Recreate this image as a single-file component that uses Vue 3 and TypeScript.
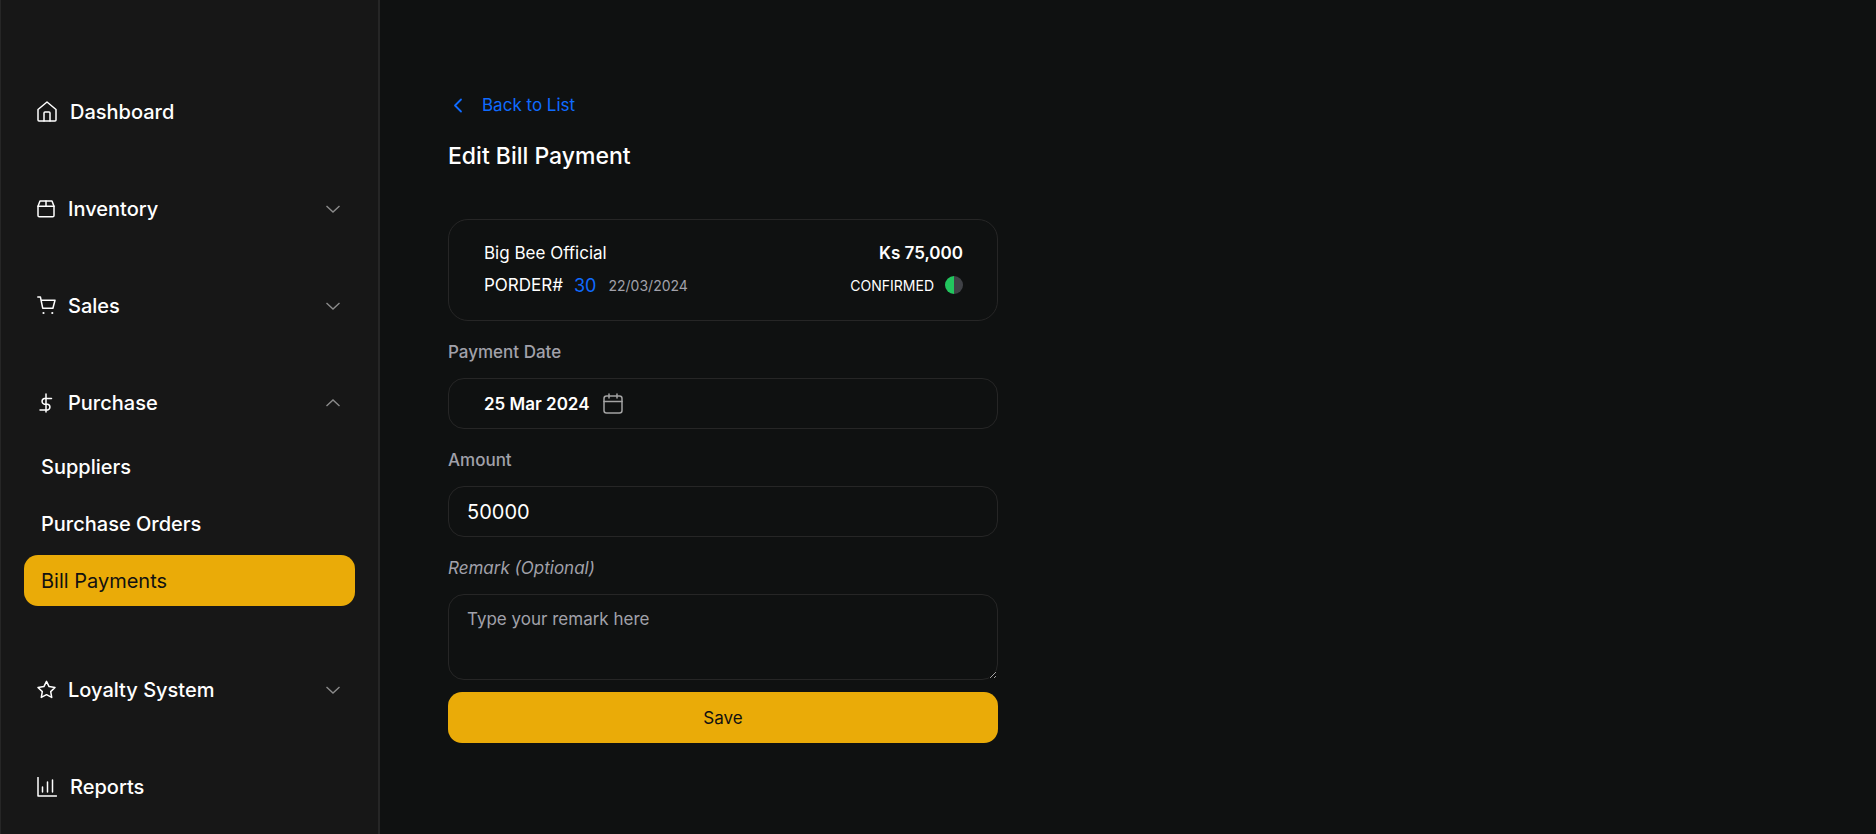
<script setup lang="ts">
interface NavItem { label: string; icon: string; gap: string; chevron?: 'up' | 'down'; children?: { label: string; active?: boolean }[] }
const items: NavItem[] = [
  { label: 'Dashboard', icon: 'home', gap: 'wide' },
  { label: 'Inventory', icon: 'box', gap: 'narrow', chevron: 'down' },
  { label: 'Sales', icon: 'cart', gap: 'narrow', chevron: 'down' },
  { label: 'Purchase', icon: 'dollar', gap: 'narrow', chevron: 'up', children: [
    { label: 'Suppliers' }, { label: 'Purchase Orders' }, { label: 'Bill Payments', active: true },
  ] },
  { label: 'Loyalty System', icon: 'star', gap: 'narrow', chevron: 'down' },
  { label: 'Reports', icon: 'chart', gap: 'wide' },
]
</script>

<template>
  <div class="shell">
    <aside class="sidebar">
      <nav class="nav">
        <div v-for="item in items" :key="item.label" class="group">
          <div class="item">
            <span class="icon-slot" :class="item.gap">
              <svg v-if="item.icon === 'home'" class="ic" width="20" height="21" viewBox="0 0 20 21"><path d="M1 8.500 10 1l9 7.500V19a1 1 0 0 1-1 1H2a1 1 0 0 1-1-1z"/><path d="M7 20v-8a1 1 0 0 1 1-1h4a1 1 0 0 1 1 1v8"/></svg>
              <svg v-else-if="item.icon === 'box'" class="ic" width="18" height="18" viewBox="0 0 18 18"><path d="M1 6.200 3 1h12l2 5.200v9.300a1.300 1.300 0 0 1-1.300 1.300H2.300A1.300 1.300 0 0 1 1 15.500z"/><path d="M1 6.200h16M9 1v5.200"/></svg>
              <svg v-else-if="item.icon === 'cart'" class="ic" width="19" height="19" viewBox="0 0 19 19"><path d="M.800 1h2.600l2.300 11.200h10.200L18 4.200H4.200"/><circle cx="6.500" cy="17" r="1.100" class="dot"/><circle cx="15.300" cy="17" r="1.100" class="dot"/></svg>
              <svg v-else-if="item.icon === 'dollar'" class="ic" width="18" height="20" viewBox="0 0 18 20"><path d="M9 1v18M14.500 5.400H7.300a3 3 0 0 0 0 5.800h3.400a3 3 0 0 1 0 5.800H3"/></svg>
              <svg v-else-if="item.icon === 'star'" class="ic" width="19" height="19" viewBox="0 0 19 19"><path d="m9.500 1.300 2.600 5.300 5.900.9-4.300 4.100 1 5.800-5.200-2.700-5.200 2.700 1-5.800L1 7.500l5.900-.9z"/></svg>
              <svg v-else class="ic" width="20" height="20" viewBox="0 0 20 20"><path d="M1 .500v18.500h18.500M5.500 15v-5M10.500 15V5M15.500 15V3"/></svg>
            </span>
            <span class="label">{{ item.label }}</span>
            <svg v-if="item.chevron" class="chev" :class="{ up: item.chevron === 'up' }" width="16" height="10" viewBox="0 0 16 10"><path d="m1.500 2 6.500 6 6.500-6"/></svg>
          </div>
          <div v-if="item.children" class="sub">
            <div v-for="c in item.children" :key="c.label" class="sub-item" :class="{ active: c.active }">{{ c.label }}</div>
          </div>
        </div>
      </nav>
    </aside>

    <main class="main">
      <div class="back">
        <svg class="back-ic" width="10" height="15" viewBox="0 0 10 15"><path d="M8 1.500 2 7.500l6 6"/></svg>
        <span>Back to List</span>
      </div>
      <h1 class="title">Edit Bill Payment</h1>

      <section class="card">
        <div class="row">
          <span class="vendor">Big Bee Official</span>
          <span class="total">Ks 75,000</span>
        </div>
        <div class="row">
          <div class="order">
            <span>PORDER#</span>
            <span class="num">30</span>
            <span class="date">22/03/2024</span>
          </div>
          <div class="status">
            <span>CONFIRMED</span>
            <span class="pie"></span>
          </div>
        </div>
      </section>

      <label class="field-label">Payment Date</label>
      <div class="date-box">
        <span>25 Mar 2024</span>
        <svg class="cal" width="20" height="21" viewBox="0 0 20 21"><rect x="1" y="3" width="18" height="17" rx="2.500"/><path d="M1 8.500h18M6 1v4M14 1v4"/></svg>
      </div>

      <label class="field-label">Amount</label>
      <input class="amount" value="50000" />

      <label class="field-label italic">Remark (Optional)</label>
      <textarea class="remark" placeholder="Type your remark here"></textarea>

      <button class="save">Save</button>
    </main>
  </div>
</template>

<style>
html, body { margin: 0; background: #0f1111; }
</style>

<style scoped>
.shell {
  display: flex;
  height: 834px;
  overflow: hidden;
  font-family: Inter, "Liberation Sans", sans-serif;
  background: #0f1111;
  color: #fff;
}
.sidebar {
  box-sizing: border-box;
  flex: 0 0 380px;
  height: 834px;
  background: #171717;
  border-left: 1px solid #262626;
  border-right: 2px solid #262626;
  padding: 87px 23px 0;
}
.nav { display: flex; flex-direction: column; gap: 48px; }
.item {
  display: flex;
  align-items: center;
  height: 49px;
  padding-left: 13px;
  font-size: 20px;
  font-weight: 500;
}
.icon-slot { display: flex; align-items: center; }
.icon-slot.wide { width: 33px; }
.icon-slot.narrow { width: 31px; }
.ic { fill: none; stroke: #fff; stroke-width: 1.500; stroke-linecap: round; stroke-linejoin: round; }
.ic .dot { fill: #fff; stroke: none; }
.label { flex: 1; }
.chev { fill: none; stroke: #8b8b8b; stroke-width: 1.400; margin-right: 14px; }
.chev.up { transform: rotate(180deg); }
.sub { display: flex; flex-direction: column; gap: 6px; margin-top: 14px; }
.sub-item {
  height: 51px;
  display: flex;
  align-items: center;
  padding-left: 17px;
  border-radius: 14px;
  font-size: 20px;
  font-weight: 500;
}
.sub-item.active { background: #eaab08; color: #111; font-weight: 400; }
.group:has(.sub) { margin-bottom: 11px; }
.main {
  box-sizing: border-box;
  width: 618px;
  padding: 93px 0 0 68px;
  display: flex;
  flex-direction: column;
}
.back { display: flex; align-items: center; height: 24px; color: #0f6bff; font-size: 17px; }
.back-ic { fill: none; stroke: #0f6bff; stroke-width: 1.800; stroke-linecap: round; stroke-linejoin: round; margin: 0 19px 0 5px; }
.title { margin: 23px 0 0; font-size: 23px; line-height: 32px; font-weight: 500; }
.card {
  box-sizing: border-box;
  height: 102px;
  margin-top: 47px;
  border: 1px solid #262626;
  border-radius: 20px;
  padding: 21px 34px 0 35px;
  display: flex;
  flex-direction: column;
  gap: 8px;
}
.row { display: flex; justify-content: space-between; align-items: center; height: 24px; }
.vendor { font-size: 17px; }
.total { font-size: 17px; font-weight: 600; }
.order { display: flex; align-items: center; font-size: 17px; }
.num { color: #0f6bff; font-size: 18px; margin-left: 11px; }
.date { color: #a1a1aa; font-size: 14px; margin-left: 12px; }
.status { display: flex; align-items: center; gap: 11px; font-size: 14px; }
.pie { width: 18px; height: 18px; border-radius: 50%; background: linear-gradient(90deg, #22c55e 50%, #3f4146 50%); }
.field-label { color: #a1a1aa; font-size: 17px; font-weight: 500; line-height: 24px; margin-top: 19px; margin-bottom: 14px; }
.field-label.italic { font-style: italic; font-weight: 400; }
.date-box {
  box-sizing: border-box;
  height: 51px;
  border: 1px solid #262626;
  border-radius: 16px;
  padding-left: 35px;
  display: flex;
  align-items: center;
  gap: 13px;
  font-size: 17px;
  font-weight: 600;
}
.cal { fill: none; stroke: #a3a3a3; stroke-width: 1.500; stroke-linecap: round; }
.amount {
  box-sizing: border-box;
  height: 51px;
  width: 100%;
  border: 1px solid #262626;
  border-radius: 16px;
  background: transparent;
  color: #fff;
  padding: 0 18px;
  font: 400 20px Inter, sans-serif;
  outline: none;
}
.remark {
  box-sizing: border-box;
  display: block;
  height: 86px;
  width: 100%;
  border: 1px solid #262626;
  border-radius: 16px;
  background: transparent;
  color: #fff;
  padding: 12px 18px;
  font: 400 17px/24px Inter, sans-serif;
  outline: none;
}
.remark::placeholder { color: #a1a1aa; opacity: 1; }
.save {
  box-sizing: border-box;
  height: 51px;
  margin-top: 12px;
  width: 100%;
  border: none;
  border-radius: 14px;
  background: #eaab08;
  color: #111;
  font: 400 17px Inter, sans-serif;
}
</style>
